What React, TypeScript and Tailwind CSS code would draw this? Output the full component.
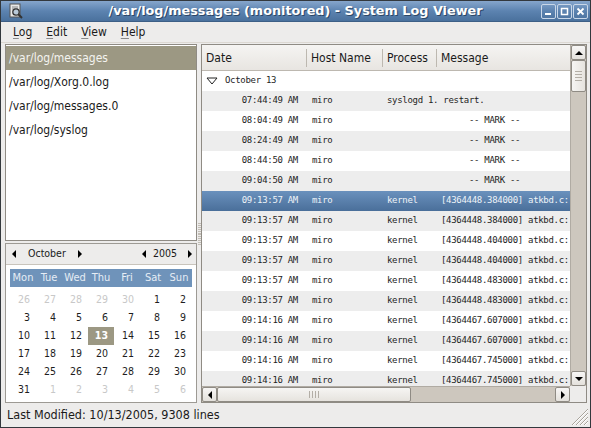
import React from 'react';

const logs = ['/var/log/messages', '/var/log/Xorg.0.log', '/var/log/messages.0', '/var/log/syslog'];

const rows = [
  { time: '07:44:49 AM', proc: '', msg: 'syslogd 1. restart.', wide: true },
  { time: '08:04:49 AM', proc: '', msg: '-- MARK --', mark: true },
  { time: '08:24:49 AM', proc: '', msg: '-- MARK --', mark: true },
  { time: '08:44:50 AM', proc: '', msg: '-- MARK --', mark: true },
  { time: '09:04:50 AM', proc: '', msg: '-- MARK --', mark: true },
  { time: '09:13:57 AM', proc: 'kernel', msg: '[4364448.384000] atkbd.c:', selected: true },
  { time: '09:13:57 AM', proc: 'kernel', msg: '[4364448.384000] atkbd.c:' },
  { time: '09:13:57 AM', proc: 'kernel', msg: '[4364448.404000] atkbd.c:' },
  { time: '09:13:57 AM', proc: 'kernel', msg: '[4364448.404000] atkbd.c:' },
  { time: '09:13:57 AM', proc: 'kernel', msg: '[4364448.483000] atkbd.c:' },
  { time: '09:13:57 AM', proc: 'kernel', msg: '[4364448.483000] atkbd.c:' },
  { time: '09:14:16 AM', proc: 'kernel', msg: '[4364467.607000] atkbd.c:' },
  { time: '09:14:16 AM', proc: 'kernel', msg: '[4364467.607000] atkbd.c:' },
  { time: '09:14:16 AM', proc: 'kernel', msg: '[4364467.745000] atkbd.c:' },
  { time: '09:14:16 AM', proc: 'kernel', msg: '[4364467.745000] atkbd.c:' },
];

const dayNames = ['Mon', 'Tue', 'Wed', 'Thu', 'Fri', 'Sat', 'Sun'];

// [day, isOtherMonth]
const weeks: [number, boolean][][] = [
  [[26, true], [27, true], [28, true], [29, true], [30, true], [1, false], [2, false]],
  [[3, false], [4, false], [5, false], [6, false], [7, false], [8, false], [9, false]],
  [[10, false], [11, false], [12, false], [13, false], [14, false], [15, false], [16, false]],
  [[17, false], [18, false], [19, false], [20, false], [21, false], [22, false], [23, false]],
  [[24, false], [25, false], [26, false], [27, false], [28, false], [29, false], [30, false]],
  [[31, false], [1, true], [2, true], [3, true], [4, true], [5, true], [6, true]],
];

const Tri = ({ dir }: { dir: 'left' | 'right' | 'up' | 'down' }) => {
  const pts = {
    left: '5,0 5,8 1,4',
    right: '1,0 1,8 5,4',
    up: '0,5 8,5 4,1',
    down: '0,1 8,1 4,5',
  }[dir];
  const horiz = dir === 'left' || dir === 'right';
  return (
    <svg width={horiz ? 6 : 8} height={horiz ? 8 : 6} viewBox={horiz ? '0 0 6 8' : '0 0 8 6'}>
      <polygon points={pts} fill="#000" />
    </svg>
  );
};

const ArrowBtn = ({ dir, className = '' }: { dir: 'left' | 'right' | 'up' | 'down'; className?: string }) => (
  <div className={`flex items-center justify-center border border-[#8f8b84] rounded-[2px] bg-linear-to-b from-[#f7f6f5] to-[#e4e1dc] ${className}`}>
    <Tri dir={dir} />
  </div>
);

const TitleBar = () => (
  <div className="h-[21px] grid grid-cols-[1fr_auto_1fr] items-center bg-linear-to-b from-[#86a6cc] via-[#5c83b0] to-[#4a719d] border-b border-[#3d5f86]">
    <div className="pl-[7px] flex items-center">
      <svg width="16" height="16" viewBox="0 0 16 16">
        <rect x="2" y="1" width="10" height="13" fill="#e8e8e8" stroke="#555" />
        <line x1="4" y1="4" x2="10" y2="4" stroke="#888" />
        <line x1="4" y1="6" x2="10" y2="6" stroke="#888" />
        <circle cx="8" cy="9" r="3.2" fill="#b9c9d9" stroke="#333" strokeWidth="1.3" />
        <line x1="10.3" y1="11.3" x2="14" y2="15" stroke="#333" strokeWidth="2" />
      </svg>
    </div>
    <div className="font-['DejaVu_Sans',sans-serif] text-white font-bold text-[12.8px] [text-shadow:1px_1px_0_#2c4767] whitespace-nowrap">
      /var/log/messages (monitored) - System Log Viewer
    </div>
    <div className="flex justify-end gap-[1px] pr-[2px]">
      {['min', 'max', 'close'].map((b) => (
        <div key={b} className="w-[15px] h-[15px] border border-[#c9d7e8] rounded-[2px] flex items-center justify-center">
          <svg width="9" height="9" viewBox="0 0 9 9">
            {b === 'min' && <rect x="1" y="6" width="6" height="2" fill="#fff" />}
            {b === 'max' && <rect x="1.5" y="1.5" width="6" height="6" fill="none" stroke="#fff" strokeWidth="1.5" />}
            {b === 'close' && (
              <g stroke="#fff" strokeWidth="1.8">
                <line x1="1.5" y1="1.5" x2="7.5" y2="7.5" />
                <line x1="7.5" y1="1.5" x2="1.5" y2="7.5" />
              </g>
            )}
          </svg>
        </div>
      ))}
    </div>
  </div>
);

const MenuBar = () => (
  <div className="h-[21px] flex items-center pl-[12px] gap-[14px] text-[12px] border-b border-[#dcd8d2]">
    {['Log', 'Edit', 'View', 'Help'].map((m) => (
      <span key={m}>
        <span className="underline underline-offset-[2px] decoration-[#8a8a8a]">{m[0]}</span>
        {m.slice(1)}
      </span>
    ))}
  </div>
);

const Calendar = () => (
  <div className="flex-1 flex flex-col border border-[#9d9a94] bg-white">
    <div className="h-[21px] flex items-center bg-[#edeceb] border-b border-[#c9c4bc] text-[10.5px]">
      <div className="w-[11px] flex justify-end"><Tri dir="left" /></div>
      <span className="ml-[11px]">October</span>
      <div className="ml-[11px]"><Tri dir="right" /></div>
      <div className="ml-auto"><Tri dir="left" /></div>
      <span className="ml-[6px]">2005</span>
      <div className="ml-[10px] mr-[3px]"><Tri dir="right" /></div>
    </div>
    <div className="px-[4px] pt-[4px]">
      <div className="h-[18px] grid grid-cols-7 items-center bg-[#6f93ba] text-[#e6edf5] text-[11px]">
        {dayNames.map((d) => (
          <span key={d} className="text-center">{d}</span>
        ))}
      </div>
      <div className="mt-[4px] grid grid-cols-7 text-[10.5px]">
        {weeks.flat().map(([d, other], i) => {
          const today = d === 13 && !other;
          return (
            <div
              key={i}
              className={`h-[18px] flex items-center justify-end pr-[6px] ${
                today ? 'bg-[#9c9883] text-white font-bold' : other ? 'text-[#c8c8c8]' : 'text-[#1e1e1e]'
              }`}
            >
              {d}
            </div>
          );
        })}
      </div>
    </div>
  </div>
);

const LeftPane = () => (
  <div className="w-[192px] flex flex-col">
    <div className="mt-[1px] h-[197px] border border-[#8f8b84] bg-white text-[12px] pt-[1px]">
      {logs.map((l, i) => (
        <div
          key={l}
          className={`h-[24px] flex items-center pl-[3px] ${i === 0 ? 'bg-[#9c9883] text-[#f4f4f0]' : 'text-[#1a1a1a]'}`}
        >
          {l}
        </div>
      ))}
    </div>
    <div className="h-[2px]" />
    <Calendar />
  </div>
);

const Splitter = () => (
  <div className="w-[4px] pt-[179px]">
    <div className="h-[24px] flex flex-col justify-between py-[1px]">
      {Array.from({ length: 12 }).map((_, i) => (
        <div key={i} className="h-px mx-[0.5px] bg-[#c2bdb5]" />
      ))}
    </div>
  </div>
);

const RightPane = () => (
  <div className="w-[386px] mt-[1px] border border-[#8f8b84] flex flex-col bg-[#edeceb]">
    <div className="flex h-[341px]">
      <div className="flex-1 flex flex-col bg-white overflow-hidden">
        <div className="h-[26px] grid grid-cols-[104px_76px_54px_1fr] bg-linear-to-b from-[#f5f4f2] to-[#e8e5e1] border-b border-[#bdb8b0] text-[12px] shrink-0">
          <div className="flex items-center pl-[4px]">Date</div>
          {['Host Name', 'Process', 'Message'].map((h) => (
            <div key={h} className="flex items-center">
              <div className="w-px h-[18px] bg-[#bdb8b0]" />
              <span className="pl-[4px] whitespace-nowrap">{h}</span>
            </div>
          ))}
        </div>
        <div className="font-['DejaVu_Sans_Mono',monospace] text-[9px] tracking-[-0.3px] text-[#1e1e1e]">
          <div className="h-[20px] flex items-center pl-[4px]">
            <svg width="12" height="8" viewBox="0 0 12 8">
              <polygon points="1,1 11,1 6,7" fill="none" stroke="#222" strokeWidth="1" />
            </svg>
            <span className="ml-[7px]">October 13</span>
          </div>
          {rows.map((r, i) => (
            <div
              key={i}
              className={`h-[20px] grid grid-cols-[104px_76px_54px_1fr] items-center whitespace-nowrap ${
                r.selected
                  ? 'bg-linear-to-b from-[#6a91bd] to-[#4a6f9a] text-[#eef3f8]'
                  : i % 2 === 0
                  ? 'bg-[#ededed]'
                  : 'bg-white'
              }`}
            >
              <span className="text-right pr-[8px]">{r.time}</span>
              <span className="pl-[6px]">miro</span>
              {r.wide ? (
                <span className="col-span-2 pl-[5px]">{r.msg}</span>
              ) : (
                <>
                  <span className="pl-[5px]">{r.proc}</span>
                  <span className={r.mark ? 'pl-[33px]' : 'pl-[5px]'}>{r.msg}</span>
                </>
              )}
            </div>
          ))}
        </div>
      </div>
      <div className="w-[16px] flex flex-col bg-[#cdc7be] border-l border-[#b0aba3]">
        <ArrowBtn dir="up" className="h-[15px]" />
        <div className="h-[32px] border border-[#8f8b84] rounded-[2px] bg-linear-to-r from-[#f6f5f3] to-[#e6e3de] flex flex-col items-center justify-center gap-[2px]">
          {[0, 1, 2, 3].map((i) => (
            <div key={i} className="w-[7px] h-px bg-[#b3aea6]" />
          ))}
        </div>
        <div className="flex-1" />
        <ArrowBtn dir="down" className="h-[15px]" />
      </div>
    </div>
    <div className="h-[16px] flex">
      <div className="w-[368px] flex bg-[#cdc7be] border-t border-[#b0aba3]">
        <ArrowBtn dir="left" className="w-[15px]" />
        <div className="w-[194px] border border-[#8f8b84] rounded-[2px] bg-linear-to-b from-[#f6f5f3] to-[#e6e3de] flex items-center justify-center gap-[2px]">
          {[0, 1, 2, 3].map((i) => (
            <div key={i} className="h-[7px] w-px bg-[#b3aea6]" />
          ))}
        </div>
        <div className="flex-1" />
        <ArrowBtn dir="right" className="w-[15px]" />
      </div>
      <div className="flex-1 bg-[#edeceb]" />
    </div>
  </div>
);

const StatusBar = () => (
  <div className="h-[24px] flex items-center pl-[6px] text-[12.5px] text-[#1a1a1a] relative">
    <span>Last Modified: 10/13/2005, 9308 lines</span>
    <svg className="absolute right-[2px] bottom-[2px]" width="16" height="16" viewBox="0 0 16 16">
      {[0, 4, 8, 12].map((o) => (
        <g key={o}>
          <line x1={16} y1={o} x2={o} y2={16} stroke="#a8a39b" />
          <line x1={16} y1={o + 1} x2={o + 1} y2={16} stroke="#ffffff" />
        </g>
      ))}
    </svg>
  </div>
);

export default function App() {
  return (
    <div className="w-[591px] h-[428px] flex flex-col border border-[#33383d] bg-[#edeceb] overflow-hidden font-['DejaVu_Sans_Condensed','DejaVu_Sans',sans-serif] text-[#1a1a1a]">
      <TitleBar />
      <MenuBar />
      <div className="h-[360px] flex pl-[4px]">
        <LeftPane />
        <Splitter />
        <RightPane />
      </div>
      <StatusBar />
    </div>
  );
}
